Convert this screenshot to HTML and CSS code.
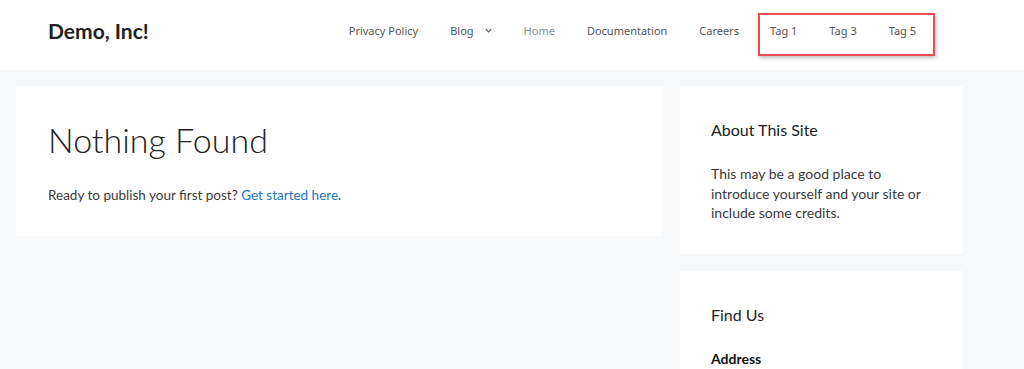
FILE: index.html
```html
<!DOCTYPE html>
<html lang="en">
<head>
  <meta charset="UTF-8">
  <title>Demo, Inc!</title>
  <link rel="stylesheet" href="styles.css">
</head>
<body>

<header class="site-header">
  <div class="logo">Demo, Inc!</div>
  <nav class="main-nav">
    <a href="#">Privacy Policy</a>
    <a href="#" class="has-sub">Blog<svg class="caret" width="7" height="5" viewBox="0 0 7 5"><path d="M0.8 1 L3.5 3.8 L6.2 1" fill="none" stroke="#666" stroke-width="1.2"/></svg></a>
    <a href="#" class="current">Home</a>
    <a href="#">Documentation</a>
    <a href="#">Careers</a>
    <span class="tags">
      <a href="#">Tag 1</a>
      <a href="#">Tag 3</a>
      <a href="#">Tag 5</a>
    </span>
  </nav>
</header>

<div class="site-content">
  <main class="content-area">
    <h1>Nothing Found</h1>
    <p>Ready to publish your first post? <a href="#">Get started here</a>.</p>
  </main>

  <aside class="sidebar">
    <section class="widget">
      <h2>About This Site</h2>
      <p>This may be a good place to introduce yourself and your site or include some credits.</p>
    </section>
    <section class="widget">
      <h2>Find Us</h2>
      <p><strong>Address</strong></p>
    </section>
  </aside>
</div>

</body>
</html>
```

FILE: styles.css
```css
body {
  margin: 0;
  font-family: Lato, sans-serif;
  background: #f7f8f9;
  color: #3a3a3a;
}

a {
  text-decoration: none;
}

.site-header {
  background: #fff;
  height: 70px;
  display: flex;
  align-items: flex-start;
  padding: 0 48px;
}

.logo {
  font-size: 21px;
  font-weight: 700;
  line-height: 28px;
  color: #222;
  margin-top: 17px;
}

.main-nav {
  display: flex;
  align-items: flex-start;
  margin: 13px 41px 0 auto;
  font-family: 'Noto Sans', sans-serif;
  font-size: 11px;
  line-height: 18px;
}

.main-nav a {
  color: #555;
  padding: 9px 16px 0;
}

.main-nav a.current {
  color: #8a8f99;
}

.has-sub .caret {
  margin-left: 11px;
  vertical-align: 2px;
}

.tags {
  display: flex;
  height: 43px;
  box-sizing: border-box;
  border: 2px solid #ef4b51;
  box-shadow: 1px 2px 4px rgba(0, 0, 0, 0.25);
  margin-left: 3px;
  padding-right: 1px;
}

.main-nav .tags a {
  padding-top: 7px;
}

.main-nav .tags a:first-child {
  padding-left: 10px;
}

.site-content {
  display: flex;
  align-items: flex-start;
  gap: 17px;
  padding: 16px 0 0 16px;
}

.content-area {
  background: #fff;
  width: 647px;
  box-sizing: border-box;
  padding: 30px 32px 33px;
}

.content-area h1 {
  font-size: 34px;
  font-weight: 300;
  color: #222;
  margin: 0 0 23px;
  line-height: 1.4;
}

.content-area p {
  font-size: 13.5px;
  margin: 0;
}

.content-area p a {
  color: #1e73be;
}

.sidebar {
  width: 283px;
  display: flex;
  flex-direction: column;
  gap: 17px;
}

.widget {
  background: #fff;
  padding: 34px 31px 31px;
  font-size: 14px;
}

.widget h2 {
  font-size: 16px;
  font-weight: 400;
  color: #222;
  margin: 0 0 25px;
}

.widget p {
  margin: 0;
  line-height: 19.5px;
}

.widget strong {
  color: #111;
}
```
